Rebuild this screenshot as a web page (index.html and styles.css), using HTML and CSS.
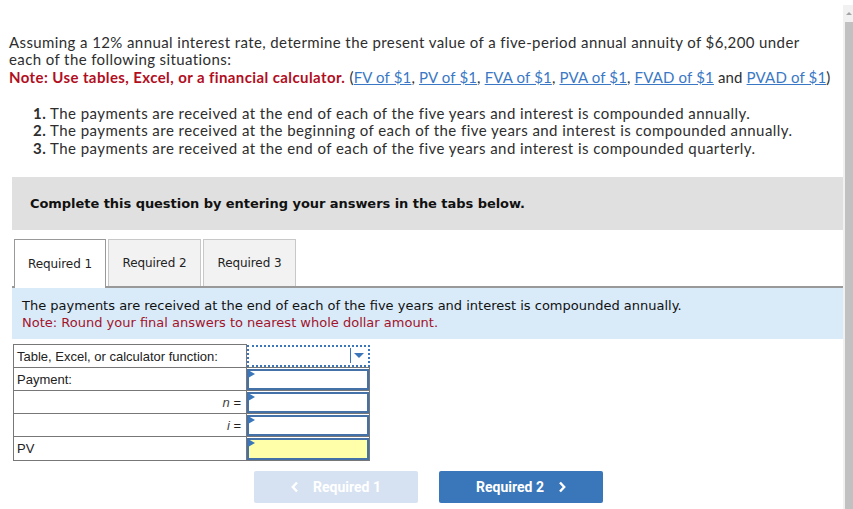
FILE: index.html
```html
<!DOCTYPE html>
<html>
<head>
<meta charset="utf-8">
<link rel="stylesheet" href="styles.css">
</head>
<body>
<div class="page">
  <div class="content">
    <p class="intro">Assuming a 12% annual interest rate, determine the present value of a five-period annual annuity of $6,200 under each of the following situations:<br><span class="noteline"><span class="note">Note: Use tables, Excel, or a financial calculator.</span> <span class="refs">(<a href="#">FV of $1</a>, <a href="#">PV of $1</a>, <a href="#">FVA of $1</a>, <a href="#">PVA of $1</a>, <a href="#">FVAD of $1</a> and <a href="#">PVAD of $1</a>)</span></span></p>
    <ol class="items">
      <li><b>1.</b> The payments are received at the end of each of the five years and interest is compounded annually.</li>
      <li><b>2.</b> The payments are received at the beginning of each of the five years and interest is compounded annually.</li>
      <li><b>3.</b> The payments are received at the end of each of the five years and interest is compounded quarterly.</li>
    </ol>
    <div class="banner">Complete this question by entering your answers in the tabs below.</div>
    <div class="tabs">
      <div class="tab active">Required 1</div>
      <div class="tab">Required 2</div>
      <div class="tab">Required 3</div>
    </div>
    <div class="info">
      <div>The payments are received at the end of each of the five years and interest is compounded annually.</div>
      <div class="info-note">Note: Round your final answers to nearest whole dollar amount.</div>
    </div>
    <table class="grid">
      <tr>
        <td class="lbl">Table, Excel, or calculator function:</td>
        <td class="sel"><div class="select"><span class="caret"></span></div></td>
      </tr>
      <tr>
        <td class="lbl">Payment:</td>
        <td class="inp"><div class="box"><span class="flag"></span></div></td>
      </tr>
      <tr>
        <td class="lbl right"><i>n</i> =</td>
        <td class="inp"><div class="box"><span class="flag"></span></div></td>
      </tr>
      <tr>
        <td class="lbl right"><i>i</i> =</td>
        <td class="inp"><div class="box"><span class="flag"></span></div></td>
      </tr>
      <tr>
        <td class="lbl">PV</td>
        <td class="inp"><div class="box result"><span class="flag"></span></div></td>
      </tr>
    </table>
    <div class="nav">
      <button class="btn prev"><svg class="chev" width="8" height="12" viewBox="0 0 8 12"><polyline points="6,1.5 1.8,6 6,10.5" fill="none" stroke="#fff" stroke-width="2.4"/></svg>Required 1</button>
      <button class="btn next">Required 2<svg class="chev" width="8" height="12" viewBox="0 0 8 12"><polyline points="2,1.5 6.2,6 2,10.5" fill="none" stroke="#fff" stroke-width="2.4"/></svg></button>
    </div>
  </div>
  <div class="scrollbar"><div class="arrow"></div><div class="thumb"></div></div>
</div>
</body>
</html>
```
FILE: styles.css
```css
html, body { margin: 0; padding: 0; background: #fff; }
body { width: 853px; height: 509px; overflow: hidden; }
.page { display: flex; height: 509px; }
.content { width: 843px; padding: 0 0 0 9px; box-sizing: border-box; }
.intro {
  margin: 34px 0 0 0;
  width: 812px;
  font-family: "Lato", "Open Sans", sans-serif;
  font-size: 15px;
  line-height: 17.3px;
  letter-spacing: 0.4px;
  color: #2e2e2e;
}
.noteline { white-space: nowrap; }
.note { color: #b10e1e; font-weight: bold; letter-spacing: 0.4px; }
.refs { letter-spacing: 0.15px; }
.intro a { color: #3a78c5; text-decoration: underline; }
.items {
  list-style: none;
  margin: 19px 0 0 0;
  padding: 0 0 0 24px;
  font-family: "Lato", "Open Sans", sans-serif;
  font-size: 15px;
  line-height: 17.5px;
  letter-spacing: 0.45px;
  color: #2e2e2e;
}
.banner {
  margin: 20px 0 0 3px;
  height: 53px;
  background: #e0e0e0;
  display: flex;
  align-items: center;
  padding-left: 18px;
  font-family: "DejaVu Sans", Verdana, sans-serif;
  font-weight: bold;
  font-size: 13px;
  letter-spacing: -0.05px;
  color: #111;
}
.tabs {
  margin: 9px 0 0 3px;
  display: flex;
  gap: 2px;
  border-bottom: 2px solid #999;
  height: 47px;
}
.tab {
  width: 93px;
  height: 47px;
  box-sizing: border-box;
  display: flex;
  align-items: center;
  justify-content: center;
  background: #f2f2f2;
  border: 1px solid #c8c8c8;
  border-bottom: none;
  font-family: "DejaVu Sans", Verdana, sans-serif;
  font-size: 12px;
  letter-spacing: -0.1px;
  color: #222;
}
.tab.active {
  background: #fff;
  border: 1px solid #999;
  border-bottom: none;
  height: 49px;
  margin-bottom: -2px;
  margin-left: 2px;
  width: 92px;
}
.info {
  margin: 0 0 0 3px;
  height: 51px;
  box-sizing: border-box;
  background: #d9ebf9;
  padding: 9px 0 0 10px;
  font-family: "DejaVu Sans", Verdana, sans-serif;
  font-size: 13px;
  line-height: 17px;
  color: #111;
}
.info-note { color: #a3132a; }
.grid {
  margin: 5px 0 0 4px;
  border-collapse: collapse;
  font-family: "Liberation Sans", Arial, sans-serif;
  font-size: 13px;
  color: #222;
}
.grid td { padding: 0; height: 23px; box-sizing: border-box; }
.grid td.lbl {
  width: 233px;
  border: 1px solid #777;
  padding: 0 0 0 3px;
}
.grid tr:last-child td { height: 24px; }
.grid td.right { text-align: right; padding-right: 5px; }
.grid td.right i { color: #444; }
.grid td.sel, .grid td.inp { width: 123px; border-top: 1px solid #777; border-right: 1px solid #777; border-bottom: 1px solid #777; }
.grid tr:first-child td.sel { border: none; }
.select {
  height: 22px;
  border: 2px dotted #3a76b9;
  box-sizing: border-box;
  position: relative;
}
.caret {
  position: absolute;
  right: 4px; top: 6px;
  width: 0; height: 0;
  border-left: 5px solid transparent;
  border-right: 5px solid transparent;
  border-top: 5px solid #3a76b9;
}
.select::after {
  content: "";
  position: absolute;
  right: 17px; top: 1px;
  width: 1px; height: 15px;
  background: #3a76b9;
}
.box {
  height: 21px;
  border: 2px solid #4472a8;
  box-sizing: border-box;
  background: #fff;
  position: relative;
}
.box.result { background: #ffffaa; height: 22px; }
.flag {
  position: absolute;
  left: -1px; top: -1px;
  width: 0; height: 0;
  border-top: 4px solid transparent;
  border-bottom: 4px solid transparent;
  border-left: 7px solid #3a76b9;
}
.nav {
  display: flex;
  gap: 21px;
  margin: 10px 0 0 245px;
}
.btn {
  width: 164px;
  height: 32px;
  border: none;
  border-radius: 2px;
  color: #fff;
  font-family: "Roboto", "Liberation Sans", sans-serif;
  font-weight: bold;
  font-size: 14px;
  display: flex;
  align-items: center;
  justify-content: center;
  gap: 14px;
  padding: 0;
}
.btn.prev { background: #d6e2f1; }
.btn.next { background: #3a76ba; }
.scrollbar {
  width: 10px;
  margin-top: 5px;
  background: #f1f1f1;
  display: flex;
  flex-direction: column;
  align-items: flex-end;
}
.arrow {
  margin: 7px 1px 0 0;
  width: 0; height: 0;
  border-left: 3px solid transparent;
  border-right: 3px solid transparent;
  border-bottom: 3px solid #a3a3a3;
}
.thumb {
  margin-top: 7px;
  width: 8px;
  flex: 1;
  background: #c1c1c1;
}
```
